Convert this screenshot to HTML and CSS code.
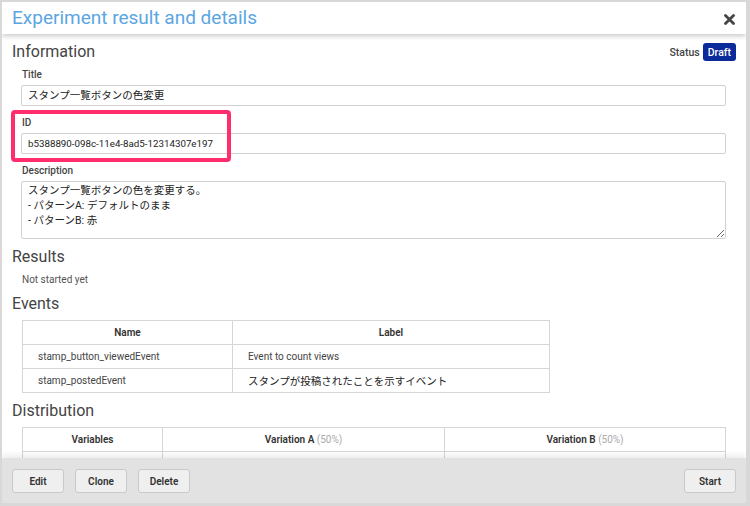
FILE: index.html
```html
<!DOCTYPE html>
<html lang="ja">
<head>
<meta charset="utf-8">
<title>Experiment result and details</title>
<link rel="stylesheet" href="styles.css">
</head>
<body>
<div class="modal">
  <header class="modal-header">
    <h1 class="modal-title">Experiment result and details</h1>
    <span class="close" aria-label="Close">
      <svg width="11" height="11" viewBox="0 0 11 11"><path d="M1.5 1.5L9.5 9.5M9.5 1.5L1.5 9.5" stroke="#454545" stroke-width="2.8" stroke-linecap="round"/></svg>
    </span>
  </header>
  <main class="modal-body">
    <div class="section-head">
      <h2 class="heading">Information</h2>
      <div class="status"><span class="status-label">Status</span><span class="badge">Draft</span></div>
    </div>
    <div class="fields">
      <div class="field">
        <div class="label">Title</div>
        <div class="input">スタンプ一覧ボタンの色変更</div>
      </div>
      <div class="field">
        <div class="label">ID</div>
        <div class="input input-latin">b5388890-098c-11e4-8ad5-12314307e197</div>
        <div class="marker"></div>
      </div>
      <div class="field">
        <div class="label">Description</div>
        <textarea class="textarea" readonly>スタンプ一覧ボタンの色を変更する。
- パターンA: デフォルトのまま
- パターンB: 赤</textarea>
      </div>
    </div>
    <h2 class="heading">Results</h2>
    <p class="note">Not started yet</p>
    <h2 class="heading">Events</h2>
    <table class="grid events">
      <thead><tr><th class="c-name">Name</th><th>Label</th></tr></thead>
      <tbody>
        <tr><td>stamp_button_viewedEvent</td><td>Event to count views</td></tr>
        <tr><td>stamp_postedEvent</td><td class="ja">スタンプが投稿されたことを示すイベント</td></tr>
      </tbody>
    </table>
    <h2 class="heading">Distribution</h2>
    <table class="grid dist">
      <thead><tr><th class="c-vars">Variables</th><th class="c-var">Variation A <span class="pct">(50%)</span></th><th>Variation B <span class="pct">(50%)</span></th></tr></thead>
      <tbody><tr><td></td><td></td><td></td></tr></tbody>
    </table>
  </main>
  <footer class="modal-footer">
    <div class="btn-group">
      <button class="btn">Edit</button>
      <button class="btn">Clone</button>
      <button class="btn">Delete</button>
    </div>
    <button class="btn">Start</button>
  </footer>
</div>
</body>
</html>
```
FILE: styles.css
```css
html, body {
  margin: 0;
  padding: 0;
}
body {
  background: #d8d8d8;
  font-family: Roboto, "Noto Sans CJK JP", sans-serif;
  color: #333;
  width: 750px;
  height: 506px;
  overflow: hidden;
}
.modal {
  margin: 2px 4px 3px 2px;
  width: 744px;
  height: 501px;
  background: #fff;
  display: flex;
  flex-direction: column;
  overflow: hidden;
}
.modal-header {
  position: relative;
  z-index: 2;
  flex: 0 0 32px;
  display: flex;
  align-items: center;
  justify-content: space-between;
  padding: 0 11px 0 10px;
  background: #fff;
  box-shadow: 0 2px 5px rgba(0, 0, 0, 0.22);
}
.modal-title {
  margin: 0;
  font-size: 19px;
  font-weight: 400;
  color: #5aa6e2;
  line-height: 24px;
}
.close {
  display: flex;
  width: 11px;
  height: 11px;
  margin-top: 2px;
}
.modal-body {
  flex: 1 1 auto;
  min-height: 0;
  overflow: hidden;
  padding: 8px 10px 0 10px;
}
.section-head {
  display: flex;
  align-items: center;
  justify-content: space-between;
  height: 20px;
  margin-bottom: 6px;
}
.heading {
  margin: 0;
  font-size: 16px;
  font-weight: 400;
  line-height: 20px;
  color: #444;
}
.status {
  display: flex;
  align-items: center;
  gap: 3px;
}
.status-label {
  font-size: 10.5px;
  font-weight: 500;
  color: #444;
}
.badge {
  display: inline-flex;
  align-items: center;
  height: 18px;
  padding: 0 5px;
  box-sizing: border-box;
  border-radius: 3px;
  background: #0b2b9b;
  color: #fff;
  font-size: 10.5px;
  font-weight: 500;
}
.fields {
  margin: 0 10px 0 9px;
  display: flex;
  flex-direction: column;
  gap: 10px;
}
.field {
  position: relative;
}
.label {
  font-size: 10px;
  font-weight: 500;
  line-height: 13px;
  color: #444;
  margin-left: 1px;
  margin-bottom: 4px;
}
.input {
  height: 21px;
  box-sizing: border-box;
  border: 1px solid #d2d2d2;
  border-radius: 2px;
  padding: 0 6px;
  font-size: 10.5px;
  line-height: 19px;
  color: #222;
}
.input-latin {
  font-size: 9.75px;
}
.textarea {
  display: block;
  width: 100%;
  height: 58px;
  box-sizing: border-box;
  margin: 0;
  border: 1px solid #d2d2d2;
  border-radius: 2px;
  padding: 1px 6px;
  font-family: Roboto, "Noto Sans CJK JP", sans-serif;
  font-size: 10.5px;
  line-height: 15px;
  color: #222;
  resize: vertical;
  outline: none;
}
.marker {
  position: absolute;
  left: -10px;
  top: -6px;
  width: 220px;
  height: 52px;
  box-sizing: border-box;
  border: 4px solid #fe2d6c;
  border-radius: 4px;
  pointer-events: none;
}
.modal-body > .heading {
  margin-top: 7.5px;
  margin-bottom: 6.5px;
}
.note {
  margin: 0 0 0 10px;
  font-size: 10px;
  line-height: 13px;
  color: #555;
}
.grid {
  border-collapse: collapse;
  margin-left: 10px;
  font-size: 10px;
  color: #444;
  table-layout: fixed;
}
.grid th, .grid td {
  border: 1px solid #d6d6d6;
  height: 24px;
  padding: 0 15px;
  box-sizing: border-box;
}
.grid th {
  font-weight: 600;
  color: #333;
  text-align: center;
}
.grid td {
  text-align: left;
}
.grid td.ja {
  font-size: 10.5px;
  color: #222;
}
.events {
  width: 528px;
}
.events .c-name {
  width: 210px;
}
.dist {
  width: 704px;
}
.dist .c-vars {
  width: 140px;
}
.dist .c-var {
  width: 282px;
}
.pct {
  font-weight: 400;
  color: #aaa;
}
.modal-footer {
  position: relative;
  z-index: 2;
  flex: 0 0 45px;
  box-sizing: border-box;
  display: flex;
  align-items: flex-start;
  justify-content: space-between;
  padding: 11px 10px 0 10px;
  background: #e2e2e2;
  box-shadow: 0 -3px 6px rgba(0, 0, 0, 0.08);
}
.btn-group {
  display: flex;
  gap: 11px;
}
.btn {
  min-width: 52px;
  height: 24px;
  padding: 0 10px;
  border: 1px solid #c9c9c9;
  border-radius: 3px;
  background: #efefef;
  font-family: Roboto, "Noto Sans CJK JP", sans-serif;
  font-size: 10px;
  font-weight: 600;
  color: #333;
}
```
